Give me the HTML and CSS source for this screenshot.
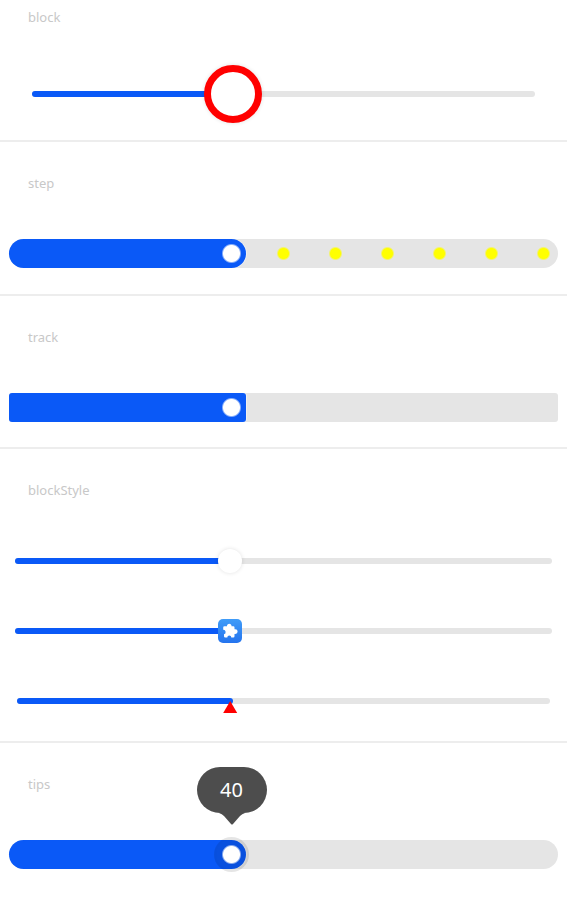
FILE: index.html
```html
<!DOCTYPE html>
<html lang="en">
<head>
<meta charset="utf-8">
<meta name="viewport" content="width=device-width, initial-scale=1">
<title>Slider</title>
<link rel="stylesheet" href="styles.css">
</head>
<body>
<main>
  <section class="section section-block">
    <label class="title" for="block">block</label>
    <div class="slider ring">
      <span class="rail"></span><span class="fill"></span>
      <input id="block" type="range" min="0" max="100" value="40">
    </div>
  </section>

  <section class="section">
    <label class="title" for="step">step</label>
    <div class="slider thick">
      <span class="rail"></span>
      <span class="steps"><i></i><i></i><i></i><i></i><i></i><i></i><i></i><i></i><i></i><i></i><i></i></span>
      <span class="fill"></span>
      <input id="step" type="range" min="0" max="100" step="10" value="40">
    </div>
  </section>

  <section class="section section-track">
    <label class="title" for="track">track</label>
    <div class="slider thick square">
      <span class="rail"></span><span class="fill"></span>
      <input id="track" type="range" min="0" max="100" value="40">
    </div>
  </section>

  <section class="section section-style">
    <label class="title" for="style-default">blockStyle</label>
    <div class="stack">
      <div class="slider round">
        <span class="rail"></span><span class="fill"></span>
        <input id="style-default" type="range" min="0" max="100" value="40">
      </div>
      <div class="slider image">
        <span class="rail"></span><span class="fill"></span>
        <input type="range" min="0" max="100" value="40" aria-label="blockStyle image">
        <svg class="puzzle" viewBox="0 0 24 24" aria-hidden="true">
          <defs>
            <linearGradient id="sky" x1="0" y1="0" x2="0" y2="1">
              <stop offset="0" stop-color="#3f9cf8"/>
              <stop offset="1" stop-color="#2574ee"/>
            </linearGradient>
          </defs>
          <rect width="24" height="24" rx="5" fill="url(#sky)"/>
          <path fill="#fff" d="M9 6.500A2.300 2.300 0 0 1 13.500 6.500V7.300H15.300Q16.500 7.300 16.500 8.500V10.300H17.300A2.300 2.300 0 0 1 17.300 14.900H16.500V17.300Q16.500 18.500 15.300 18.500H13.300A2 2 0 0 0 9.300 18.500H7.200Q6 18.500 6 17.300V15.300A2.300 2.300 0 0 0 5.200 10.800V8.500Q5.200 7.300 6.400 7.300H9Z"/>
        </svg>
      </div>
      <div class="slider arrow">
        <span class="rail"></span><span class="fill"></span>
        <input type="range" min="0" max="100" value="40" aria-label="blockStyle shape">
      </div>
    </div>
  </section>

  <section class="section">
    <label class="title" for="tips">tips</label>
    <div class="slider thick pressed">
      <span class="rail"></span><span class="fill"></span>
      <input id="tips" type="range" min="0" max="100" value="40">
      <output class="tip" for="tips">40
        <svg class="tail" viewBox="0 0 26 13" aria-hidden="true"><path d="M0 0H26Q23 1 21 3L14 11Q13 12 12 11L5 3Q3 1 0 0Z"/></svg>
      </output>
    </div>
  </section>
</main>
</body>
</html>
```
FILE: styles.css
```css
* { box-sizing: border-box; }

body {
  margin: 0;
  background: #fff;
  font-family: "Noto Sans", "Open Sans", sans-serif;
}

.section {
  padding: 31px 0 26px;
  border-bottom: 2px solid #ededed;
}
.section:last-child { border-bottom: 0; }
.section-block { padding: 7px 0 17px; }
.section-track { padding-bottom: 25px; }
.section-style { padding-bottom: 28px; }

.title {
  display: block;
  margin-left: 28px;
  color: #c8c8c8;
  font-size: 13px;
  line-height: 20px;
}

.stack {
  display: grid;
  gap: 46px;
  margin-top: 49px;
}

/* Rail, fill and input share one grid cell; the rail ends sit under the
   thumb centre at the minimum and maximum values. */
.slider {
  --thumb: 24px;
  --rail: 6px;
  --center: calc((100% - var(--thumb)) * 0.4 + var(--thumb) / 2);
  position: relative;
  display: grid;
  align-items: center;
  height: var(--thumb);
  margin: 0 3px;
}
.slider > .rail,
.slider > .fill,
.slider > .steps,
.slider > input { grid-area: 1 / 1; }

.rail,
.fill {
  height: var(--rail);
  margin: 0 calc(var(--thumb) / 2);
  border-radius: 3px;
  background: #e5e5e5;
}
.fill {
  width: calc((100% - var(--thumb)) * 0.4 + 3px);
  margin-right: 0;
  background: #0a59f7;
}

input {
  -webkit-appearance: none;
  appearance: none;
  width: 100%;
  height: var(--thumb);
  margin: 0;
  background: transparent;
}
input::-webkit-slider-thumb {
  -webkit-appearance: none;
  width: var(--thumb);
  height: var(--thumb);
  border-radius: 50%;
  background: #fff;
}

.ring { --thumb: 58px; margin-top: 38px; }
.ring input::-webkit-slider-thumb {
  border: 7px solid #f00;
  box-shadow: 0 0 4px rgba(0, 0, 0, 0.12);
}

.round input::-webkit-slider-thumb { box-shadow: 0 0 4px rgba(0, 0, 0, 0.12); }

.image input::-webkit-slider-thumb { background: transparent; }
.puzzle {
  position: absolute;
  left: var(--center);
  width: 24px;
  height: 24px;
  transform: translateX(-50%);
  pointer-events: none;
}

.arrow {
  --thumb: 28px;
  grid-template-rows: 24px;
  height: 24px;
}
.arrow input::-webkit-slider-thumb {
  border-radius: 0;
  background: #f00;
  clip-path: polygon(14px 14px, 21px 26px, 7px 26px);
}

.thick {
  --thumb: 29px;
  --rail: 29px;
  margin: 46px 9px 0;
}
.thick .rail,
.thick .fill { margin: 0; border-radius: 15px; }
.thick .fill {
  width: calc((100% - var(--thumb)) * 0.4 + var(--thumb));
  box-shadow: 1px 0 #f0f0f0;
}
.thick input::-webkit-slider-thumb {
  background: radial-gradient(circle, #fff 8px, rgba(255, 255, 255, 0) 10px);
}
.thick.square .rail,
.thick.square .fill { border-radius: 3px; }

.steps {
  display: flex;
  justify-content: space-between;
  padding: 0 8px;
}
.steps i {
  width: 13px;
  height: 13px;
  background: radial-gradient(circle, #ff0 5px, rgba(255, 255, 0, 0) 7px);
}

.pressed input::-webkit-slider-thumb {
  background: radial-gradient(circle, #fff 8px, rgba(0, 0, 0, 0.1) 10px);
  box-shadow: 0 0 0 3px rgba(0, 0, 0, 0.1);
}

.tip {
  position: absolute;
  bottom: 56px;
  left: var(--center);
  width: 70px;
  height: 46px;
  border-radius: 23px;
  background: #4d4d4d;
  color: #fff;
  font-size: 20px;
  line-height: 46px;
  text-align: center;
  transform: translateX(-50%);
}
.tail {
  position: absolute;
  top: 100%;
  left: 22px;
  width: 26px;
  height: 13px;
  fill: #4d4d4d;
}
```
